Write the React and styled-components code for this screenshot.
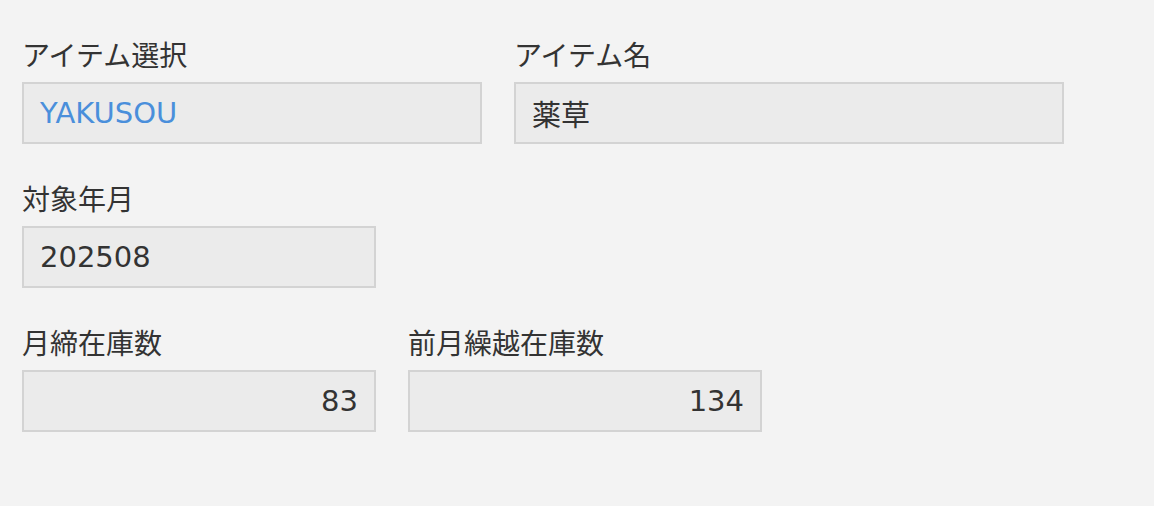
import React from "react";
import styled, { createGlobalStyle } from "styled-components";

const GlobalStyle = createGlobalStyle`
  body {
    margin: 0;
    background: #f3f3f3;
    font-family: "Noto Sans CJK JP", "DejaVu Sans", sans-serif;
  }
`;

const Page = styled.div`
  display: flex;
  flex-direction: column;
  gap: 36px;
  padding: 36px 22px;
`;

const Row = styled.div`
  display: flex;
  gap: 32px;
`;

const Field = styled.div`
  display: flex;
  flex-direction: column;
  width: ${({ width }) => width}px;
`;

const Label = styled.div`
  font-size: 28px;
  line-height: 36px;
  height: 36px;
  color: #333;
  margin-bottom: 10px;
  white-space: nowrap;
`;

const Box = styled.div`
  box-sizing: border-box;
  height: 62px;
  display: flex;
  align-items: center;
  justify-content: ${({ align }) => (align === "right" ? "flex-end" : "flex-start")};
  padding: 0 16px;
  background: #ebebeb;
  border: 2px solid #d3d3d3;
  font-family: "DejaVu Sans", "Noto Sans CJK JP", sans-serif;
  font-size: 29px;
  color: ${({ link }) => (link ? "#4a8fdb" : "#333")};
  white-space: nowrap;
`;

const Item = ({ label, value, width, align, link }) => (
  <Field width={width}>
    <Label>{label}</Label>
    <Box align={align} link={link}>
      {value}
    </Box>
  </Field>
);

const App = () => (
  <>
    <GlobalStyle />
    <Page>
      <Row>
        <Item label="アイテム選択" value="YAKUSOU" width={460} link />
        <Item label="アイテム名" value="薬草" width={550} />
      </Row>
      <Row>
        <Item label="対象年月" value="202508" width={354} />
      </Row>
      <Row>
        <Item label="月締在庫数" value="83" width={354} align="right" />
        <Item label="前月繰越在庫数" value="134" width={354} align="right" />
      </Row>
    </Page>
  </>
);

export default App;
